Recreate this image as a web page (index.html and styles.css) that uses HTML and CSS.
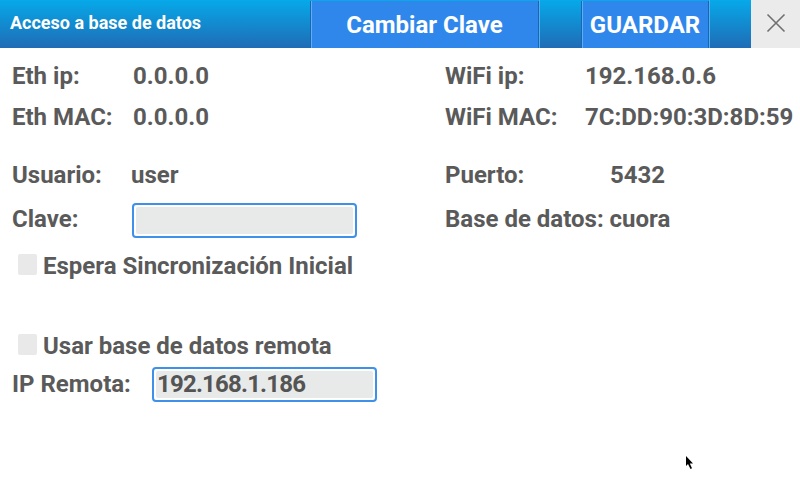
FILE: index.html
```html
<!DOCTYPE html>
<html lang="es">
<head>
<meta charset="utf-8">
<title>Acceso a base de datos</title>
<link rel="stylesheet" href="styles.css">
</head>
<body>
<div class="screen">
  <header class="topbar">
    <div class="title">Acceso a base de datos</div>
    <div class="btn btn-change">Cambiar Clave</div>
    <div class="spacer"></div>
    <div class="btn btn-save">GUARDAR</div>
    <div class="spacer"></div>
    <div class="close">
      <svg width="20" height="20" viewBox="0 0 20 20"><path d="M1.5 1.5 L18.5 18.5 M18.5 1.5 L1.5 18.5" stroke="#6f6f6f" stroke-width="1.6" fill="none"/></svg>
    </div>
  </header>

  <main class="content">
    <div class="cols">
      <div class="col col-left">
        <div class="row r1"><span class="lbl w-eth">Eth ip:</span><span class="val">0.0.0.0</span></div>
        <div class="row r1"><span class="lbl w-eth">Eth MAC:</span><span class="val">0.0.0.0</span></div>
        <div class="row r2 gap-top"><span class="lbl w-eth">Usuario:</span><span class="val val-user">user</span></div>
        <div class="row r2"><span class="lbl w-eth">Clave:</span><div class="field field-clave"><div class="field-in"></div></div></div>
      </div>
      <div class="col col-right">
        <div class="row r1"><span class="lbl w-wifi">WiFi ip:</span><span class="val">192.168.0.6</span></div>
        <div class="row r1"><span class="lbl w-wifi">WiFi MAC:</span><span class="val">7C:DD:90:3D:8D:59</span></div>
        <div class="row r2 gap-top"><span class="lbl w-port">Puerto:</span><span class="val">5432</span></div>
        <div class="row r2"><span class="lbl">Base de datos: cuora</span></div>
      </div>
    </div>

    <div class="row r3 check-row first-check"><span class="check"></span><span class="lbl">Espera Sincronización Inicial</span></div>
    <div class="row r3 check-row second-check"><span class="check"></span><span class="lbl">Usar base de datos remota</span></div>
    <div class="row r4"><span class="lbl w-ip">IP Remota:</span><div class="field field-ip"><div class="field-in field-text">192.168.1.186</div></div></div>
  </main>

  <svg class="cursor" width="10" height="16" viewBox="0 0 10 16"><path d="M0 0 L0 10 L2 8 L4.5 13 L6 12.3 L3.8 7.5 L7 7.5 Z" fill="#000"/></svg>
</div>
</body>
</html>
```

FILE: styles.css
```css
* { box-sizing: border-box; }
html, body { margin: 0; padding: 0; }
body {
  width: 800px;
  height: 480px;
  overflow: hidden;
  background: #ffffff;
  font-family: Roboto, "Liberation Sans", sans-serif;
}
.screen {
  position: relative;
  width: 800px;
  height: 480px;
}

/* Top bar */
.topbar {
  display: flex;
  height: 48px;
  background: linear-gradient(to bottom, #06a9e9 0%, #1f6cb6 100%);
}
.title {
  width: 310px;
  padding-left: 10px;
  color: #ffffff;
  font-size: 18px;
  font-weight: 700;
  line-height: 45px;
}
.btn {
  margin-top: 1px;
  height: 47px;
  background: #2f87ec;
  color: #ffffff;
  font-size: 24px;
  font-weight: 700;
  display: flex;
  align-items: center;
  justify-content: center;
  border-left: 1px solid #1c64b4;
  border-right: 1px solid #1c64b4;
  box-shadow: inset 1px 0 0 #5bb0f4;
}
.btn-change { width: 229px; padding-top: 1px; }
.btn-save { width: 128px; padding-top: 1px; }
.spacer {
  width: 42px;
  border-left: 1px solid #4fb0f0;
}
.close {
  flex: 1;
  background: #ebebeb;
  display: flex;
  align-items: center;
  justify-content: center;
}
.close svg { margin-bottom: 2px; }

/* Content */
.content {
  padding: 0 0 0 12px;
  color: #5a5a5a;
  font-size: 24px;
  font-weight: 700;
}
.cols {
  display: grid;
  grid-template-columns: 433px 1fr;
  padding-top: 8px;
}
.col { display: flex; flex-direction: column; }
.row {
  display: flex;
  align-items: center;
  white-space: nowrap;
}
.r1 { height: 41px; line-height: 41px; }
.r2 { height: 44px; line-height: 44px; }
.r3 { height: 36px; line-height: 36px; }
.r4 { height: 40px; line-height: 40px; }
.gap-top { margin-top: 15px; }

.w-eth { width: 121px; }
.w-wifi { width: 140px; }
.w-port { width: 165px; }
.w-ip { width: 140px; }
.val-user { margin-left: -2px; }

.field {
  width: 225px;
  height: 35px;
  border: 2px solid #3e90e8;
  border-radius: 4px;
  padding: 2px;
}
.field-clave { margin-left: -1px; margin-top: 3px; }
.field-in {
  height: 27px;
  background: #e8eae9;
  border-radius: 2px;
  line-height: 27px;
  padding-left: 1px;
  color: #545454;
}
.field-text { letter-spacing: -0.8px; }

.first-check { margin-top: 7px; }
.second-check { margin-top: 44px; }
.check {
  width: 19px;
  height: 21px;
  margin-left: 6px;
  margin-right: 6px;
  margin-bottom: 3px;
  background: #e9e9e9;
  border-radius: 2px;
}

.cursor {
  position: absolute;
  left: 686px;
  top: 456px;
}
```
